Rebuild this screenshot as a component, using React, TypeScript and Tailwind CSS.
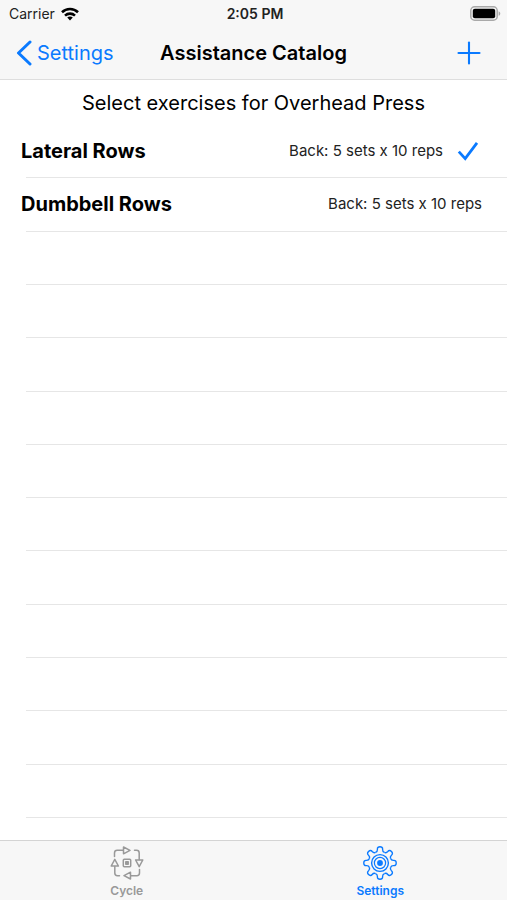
import { Plus } from 'lucide-react';

type Exercise = {
  name: string;
  detail: string;
  selected: boolean;
};

const exercises: Exercise[] = [
  { name: 'Lateral Rows', detail: 'Back: 5 sets x 10 reps', selected: true },
  { name: 'Dumbbell Rows', detail: 'Back: 5 sets x 10 reps', selected: false },
];

const EMPTY_ROWS = 11;
const TEETH = [0, 45, 90, 135, 180, 225, 270, 315];

function WifiIcon() {
  return (
    <svg viewBox="0 0 18 14" className="w-[18px] h-[14px]" fill="none" stroke="#000" strokeWidth="2.6">
      <path d="M1 5.2C5.4 1 12.6 1 17 5.2" />
      <path d="M4 8.6C6.8 6 11.2 6 14 8.6" />
      <path d="M9 13.4 6.2 10.6C7.8 9.2 10.2 9.2 11.8 10.6Z" fill="#000" stroke="none" />
    </svg>
  );
}

function BatteryIcon() {
  return (
    <svg viewBox="0 0 31 15" className="w-[31px] h-[15px]">
      <rect x="0.8" y="0.8" width="26.4" height="13.4" rx="3.8" fill="#f7f7f7" stroke="#a9a9a9" strokeWidth="1.5" />
      <rect x="2.8" y="2.8" width="22.4" height="9.4" rx="2" fill="#000" />
      <path d="M28.6 5.2C30.8 6 30.8 9 28.6 9.8Z" fill="#a9a9a9" />
    </svg>
  );
}

function CheckIcon() {
  return (
    <svg viewBox="0 0 22 20" className="ml-[14px] mr-[3px] w-[22px] h-5 text-[#0a7aff]" fill="none" stroke="currentColor" strokeWidth="2.8">
      <path d="M1.8 10.6 8.2 17.6 20 1.8" />
    </svg>
  );
}

function CycleIcon() {
  return (
    <svg viewBox="0 0 34 34" className="size-[34px]" fill="none" stroke="currentColor" strokeWidth="1.5" strokeLinejoin="round" strokeLinecap="round">
      <path d="M4.5 10.5V7Q4.5 4.3 7.2 4.3H13" />
      <path d="M13.5 1V7.8L20 4.4Z" />
      <path d="M24.5 4.3H26.5Q29.2 4.3 29.2 7V13.5" />
      <path d="M25.6 14H32.8L29.2 20.6Z" />
      <path d="M29.5 23.5V27Q29.5 29.7 26.8 29.7H21" />
      <path d="M20.5 33V26.2L14 29.6Z" />
      <path d="M9.5 29.7H7.5Q4.8 29.7 4.8 27V20.5" />
      <path d="M8.4 20H1.2L4.8 13.4Z" />
      <rect x="13.3" y="13.3" width="7.4" height="7.4" rx="1" />
      <rect x="15.8" y="15.8" width="2.4" height="2.4" fill="currentColor" />
    </svg>
  );
}

function GearIcon() {
  return (
    <svg viewBox="0 0 34 34" className="size-[34px]" fill="none" stroke="currentColor" strokeWidth="1.4">
      {TEETH.map((angle) => (
        <path
          key={angle}
          d="M12.6 6.4C14.4 5.7 14.5 4.9 14.4 3.4C14.2 1.5 15.4.8 17 .8C18.6.8 19.8 1.5 19.6 3.4C19.5 4.9 19.6 5.7 21.4 6.4"
          transform={`rotate(${angle} 17 17)`}
        />
      ))}
      <circle cx="17" cy="17" r="8.4" />
      <circle cx="17" cy="17" r="5.6" strokeWidth="1.2" />
      <circle cx="17" cy="17" r="2.9" fill="currentColor" stroke="none" />
    </svg>
  );
}

function Header() {
  return (
    <header className="bg-[#f7f7f7] border-b border-[#dedede]">
      <div className="grid grid-cols-3 items-center h-[27px] pl-[9px] pr-[6px]">
        <div className="flex items-center gap-[6px] text-sm text-[#222]">
          Carrier <WifiIcon />
        </div>
        <div className="text-center text-sm font-semibold text-[#222]">2:05 PM</div>
        <div className="flex justify-end">
          <BatteryIcon />
        </div>
      </div>
      <div className="grid grid-cols-[1fr_auto_1fr] items-center h-[52px] px-4">
        <a href="#settings" className="flex items-center gap-[5px] text-xl text-[#0a7aff]">
          <svg viewBox="0 0 16 26" className="w-4 h-[26px]" fill="none" stroke="currentColor" strokeWidth="3" strokeLinecap="round" strokeLinejoin="round">
            <path d="M14 2 2.5 13 14 24" />
          </svg>
          Settings
        </a>
        <h1 className="text-xl font-semibold">Assistance Catalog</h1>
        <button type="button" aria-label="Add exercise" className="justify-self-end pr-1 text-[#0a7aff]">
          <Plus size={36} strokeWidth={1.4} />
        </button>
      </div>
    </header>
  );
}

export default function App() {
  return (
    <div className="min-h-screen flex flex-col bg-white text-black font-['Inter',sans-serif]">
      <Header />

      <main className="flex-1 flex flex-col">
        <h2 className="h-[45px] flex items-center justify-center text-xl">Select exercises for Overhead Press</h2>
        <ul className="flex-1 grid auto-rows-fr pb-[22px]">
          {exercises.map((exercise) => (
            <li key={exercise.name} className="flex flex-col min-h-[44px]">
              <button type="button" aria-pressed={exercise.selected} className="flex-1 flex items-center pl-[21px] pr-[25px]">
                <span className="text-xl font-bold">{exercise.name}</span>
                <span className="ml-auto text-[15px] text-[#222]">{exercise.detail}</span>
                {exercise.selected && <CheckIcon />}
              </button>
              <div className="ml-[26px] border-b border-[#e6e6e6]" />
            </li>
          ))}
          {Array.from({ length: EMPTY_ROWS }, (_, i) => (
            <li key={i} aria-hidden="true" className="ml-[26px] border-b border-[#e6e6e6]" />
          ))}
        </ul>
      </main>

      <nav className="grid grid-cols-2 h-[60px] bg-[#f7f7f7] border-t border-[#d4d4d4] text-xs font-semibold">
        <a href="#cycle" className="flex flex-col items-center pt-[5px] gap-[3px] text-[#999]">
          <CycleIcon />
          Cycle
        </a>
        <a href="#settings" aria-current="page" className="flex flex-col items-center pt-[5px] gap-[3px] text-[#0a7aff]">
          <GearIcon />
          Settings
        </a>
      </nav>
    </div>
  );
}
